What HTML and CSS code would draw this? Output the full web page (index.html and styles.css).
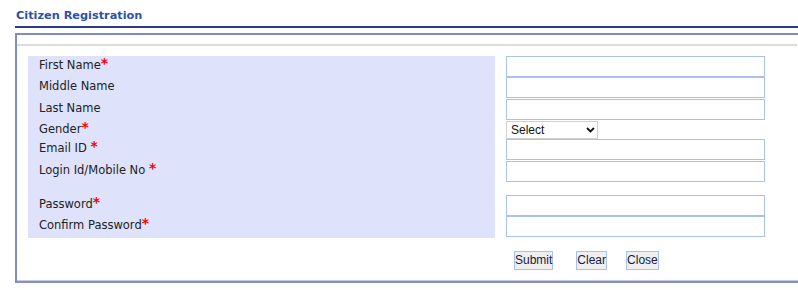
FILE: index.html
```html
<!DOCTYPE html>
<html>
<head>
<meta charset="utf-8">
<title>Citizen Registration</title>
<link rel="stylesheet" href="styles.css">
</head>
<body>
<div class="page">
  <div class="title">Citizen Registration</div>
  <div class="box">
    <div class="box-head"></div>
    <form class="form">
      <div class="label">First Name<span class="req">*</span></div>
      <div class="field"><input class="txt" type="text" autofocus></div>
      <div class="label">Middle Name</div>
      <div class="field"><input class="txt" type="text"></div>
      <div class="label">Last Name</div>
      <div class="field"><input class="txt" type="text"></div>
      <div class="label">Gender<span class="req">*</span></div>
      <div class="field">
        <div class="select-wrap">
          <select class="sel"><option>Select</option><option>Male</option><option>Female</option></select>
          <svg class="chev" width="9" height="6" viewBox="0 0 9 6"><polyline points="1,1 4.5,4.5 8,1" fill="none" stroke="#111" stroke-width="1.8"/></svg>
        </div>
      </div>
      <div class="label">Email ID <span class="req">*</span></div>
      <div class="field"><input class="txt" type="text"></div>
      <div class="label">Login Id/Mobile No <span class="req">*</span></div>
      <div class="field"><input class="txt" type="text"></div>
      <div class="label"></div>
      <div class="field"></div>
      <div class="label">Password<span class="req">*</span></div>
      <div class="field"><input class="txt" type="password"></div>
      <div class="label">Confirm Password<span class="req">*</span></div>
      <div class="field"><input class="txt" type="password"></div>
      <div class="empty"></div>
      <div class="buttons">
        <button type="button" class="btn">Submit</button>
        <button type="button" class="btn btn-clear">Clear</button>
        <button type="button" class="btn btn-close">Close</button>
      </div>
    </form>
  </div>
</div>
</body>
</html>
```
FILE: styles.css
```css
html, body {
  margin: 0;
  padding: 0;
  overflow: hidden;
  background: #ffffff;
}

.page {
  padding: 9px 0 0 15px;
  font-family: "DejaVu Sans", Verdana, sans-serif;
}

.title {
  font-size: 11.3px;
  font-weight: bold;
  line-height: 14px;
  color: #2b52aa;
  padding: 0 0 3px 1px;
  border-bottom: 2px solid #2a3b8c;
  width: 800px;
}

.box {
  margin-top: 5px;
  width: 800px;
  border-top: 2px solid #7f8bc4;
  border-left: 2px solid #7f8bc4;
  border-bottom: 2px solid #8590c6;
  box-shadow: inset 0 -1px 0 #c9cbd6;
}

.box-head {
  height: 9px;
  border-bottom: 2px solid #dddddd;
  margin-right: 20px;
}

.form {
  display: grid;
  grid-template-columns: 467px 259px;
  grid-template-rows: 21px 22px 21px 19px 22px 21px 13px 21px 22px auto;
  column-gap: 11px;
  margin: 10px 0 0 0;
  padding: 0 0 11px 11px;
}

.label {
  background: #dee3fb;
  font-size: 11.5px;
  line-height: 14px;
  color: #222222;
  padding: 2px 0 0 11px;
  white-space: nowrap;
}

.req {
  color: #ff0000;
  font-weight: bold;
  font-size: 14px;
  line-height: 10px;
  vertical-align: 1px;
}

.txt {
  display: block;
  box-sizing: border-box;
  width: 259px;
  height: 21px;
  margin: 0;
  padding: 0 2px;
  border: 1px solid #a9c3e7;
  background: #ffffff;
  font-family: "Liberation Sans", Arial, sans-serif;
  font-size: 12px;
  outline: none;
}

.txt:focus {
  outline: none;
}

.select-wrap {
  position: relative;
  width: 92px;
  height: 18px;
  margin-top: 1px;
}

.sel {
  -webkit-appearance: none;
  appearance: none;
  display: block;
  box-sizing: border-box;
  width: 92px;
  height: 18px;
  margin: 0;
  padding: 0 0 0 4px;
  border: 1px solid #cfcfcf;
  border-radius: 0;
  background: #ffffff;
  color: #111111;
  font-family: "Liberation Sans", Arial, sans-serif;
  font-size: 12px;
  line-height: 16px;
}

.chev {
  position: absolute;
  left: 80px;
  top: 6px;
  pointer-events: none;
}

.buttons {
  display: flex;
  align-items: flex-start;
  padding: 13px 0 0 8px;
}

.btn {
  box-sizing: border-box;
  height: 19px;
  margin: 0;
  padding: 0;
  border: 1px solid #a7c2e6;
  border-radius: 0;
  background: #efefef;
  color: #1a1a3a;
  font-family: "Liberation Sans", Arial, sans-serif;
  font-size: 12px;
  line-height: 17px;
}

.btn-clear {
  margin-left: 23px;
}

.btn-close {
  margin-left: 19px;
}
```
